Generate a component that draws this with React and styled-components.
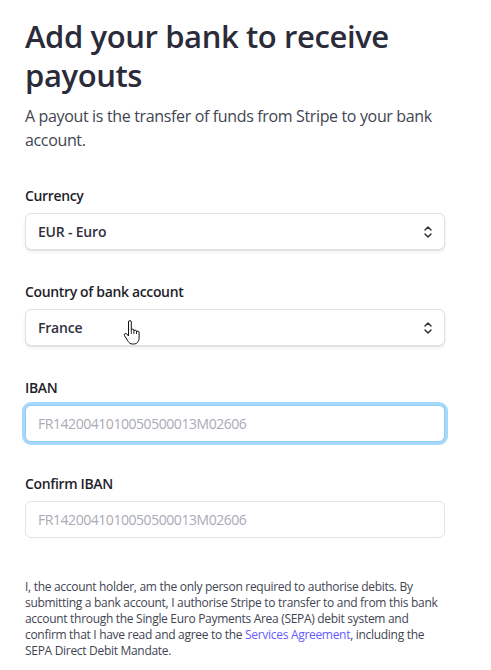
import React from "react";
import styled, { createGlobalStyle } from "styled-components";

const Global = createGlobalStyle`
  html, body { margin: 0; padding: 0; background: #ffffff; }
  body { font-family: "Open Sans", "Noto Sans", sans-serif; color: #30313d; }
  * { box-sizing: border-box; }
`;

const Page = styled.div`
  width: 420px;
  margin-left: 25px;
  padding-top: 17px;
  display: flex;
  flex-direction: column;
`;

const Title = styled.h1`
  margin: 0;
  font-size: 31px;
  line-height: 39px;
  font-weight: 600;
  color: #2b2b3a;
  letter-spacing: -0.4px;
`;

const Subtitle = styled.p`
  margin: 9px 0 0;
  font-size: 16px;
  line-height: 24px;
  color: #414552;
  letter-spacing: -0.35px;
`;

const Form = styled.div`
  margin-top: 34px;
  display: flex;
  flex-direction: column;
  gap: 32px;
`;

const Field = styled.div`
  display: flex;
  flex-direction: column;
  gap: 7px;
`;

const Label = styled.label`
  font-size: 14px;
  line-height: 20px;
  font-weight: 600;
  color: #1f1f2b;
  letter-spacing: -0.35px;
`;

const SelectBox = styled.div`
  position: relative;
  height: 37px;
  border: 1px solid #e0e0e6;
  border-radius: 6px;
  background: #fff;
  box-shadow: 0 1px 1px rgba(0, 0, 0, 0.08), 0 2px 4px rgba(0, 0, 0, 0.05);
  display: flex;
  align-items: center;
  justify-content: space-between;
  padding: 0 11px 0 12px;
  font-size: 14px;
  font-weight: 600;
  color: #30313d;
  letter-spacing: -0.2px;
`;

const Input = styled.div`
  height: 37px;
  border: 1px solid ${(p) => (p.$focused ? "#8fcdf5" : "#e3e3e8")};
  border-radius: 6px;
  background: #fff;
  box-shadow: ${(p) => (p.$focused ? "0 0 0 3px #a5d8fa" : "none")};
  display: flex;
  align-items: center;
  padding: 0 12px;
  font-size: 14px;
  color: #a9abb5;
  letter-spacing: -0.45px;
`;

const Cursor = styled.svg`
  position: absolute;
  left: 97px;
  top: 10px;
`;

const Legal = styled.p`
  margin: 41px 0 0;
  font-size: 12px;
  line-height: 16px;
  color: #414552;
  letter-spacing: -0.3px;
`;

const Link = styled.a`
  color: #635bff;
  text-decoration: none;
`;

const Chevron = () => (
  <svg width="10" height="14" viewBox="0 0 10 14" fill="none">
    <path d="M2 5 L5 2 L8 5" stroke="#30313d" strokeWidth="1.5" strokeLinecap="round" strokeLinejoin="round" />
    <path d="M2 9 L5 12 L8 9" stroke="#30313d" strokeWidth="1.5" strokeLinecap="round" strokeLinejoin="round" />
  </svg>
);

const Hand = () => (
  <Cursor width="18" height="26" viewBox="0 0 18 26">
    <path
      d="M5.5 2 a1.4 1.4 0 0 1 2.8 0 V10 a1.4 1.4 0 0 1 2.6 0 V11 a1.4 1.4 0 0 1 2.6 0 V12 a1.4 1.4 0 0 1 2.6 0 V18 c0 3.5 -2.2 6 -5.4 6 H9.4 c-2 0 -3.2 -1 -4.2 -2.6 L1.6 15.8 a1.4 1.4 0 0 1 2.2 -1.8 L5.5 16 Z"
      fill="#fff"
      stroke="#111"
      strokeWidth="1"
      strokeLinejoin="round"
    />
    <path d="M8.3 10 V14 M10.9 11 V14 M13.5 12 V14" stroke="#111" strokeWidth="0.9" />
  </Cursor>
);

export default function App() {
  return (
    <>
      <Global />
      <Page>
        <Title>Add your bank to receive payouts</Title>
        <Subtitle>A payout is the transfer of funds from Stripe to your bank account.</Subtitle>
        <Form>
          <Field>
            <Label>Currency</Label>
            <SelectBox>
              <span>EUR - Euro</span>
              <Chevron />
            </SelectBox>
          </Field>
          <Field>
            <Label>Country of bank account</Label>
            <SelectBox>
              <span>France</span>
              <Chevron />
              <Hand />
            </SelectBox>
          </Field>
          <Field>
            <Label>IBAN</Label>
            <Input $focused>FR1420041010050500013M02606</Input>
          </Field>
          <Field>
            <Label>Confirm IBAN</Label>
            <Input>FR1420041010050500013M02606</Input>
          </Field>
        </Form>
        <Legal>
          I, the account holder, am the only person required to authorise debits. By submitting a bank account, I
          authorise Stripe to transfer to and from this bank account through the Single Euro Payments Area (SEPA)
          debit system and confirm that I have read and agree to the <Link href="#">Services Agreement</Link>,
          including the SEPA Direct Debit Mandate.
        </Legal>
      </Page>
    </>
  );
}
